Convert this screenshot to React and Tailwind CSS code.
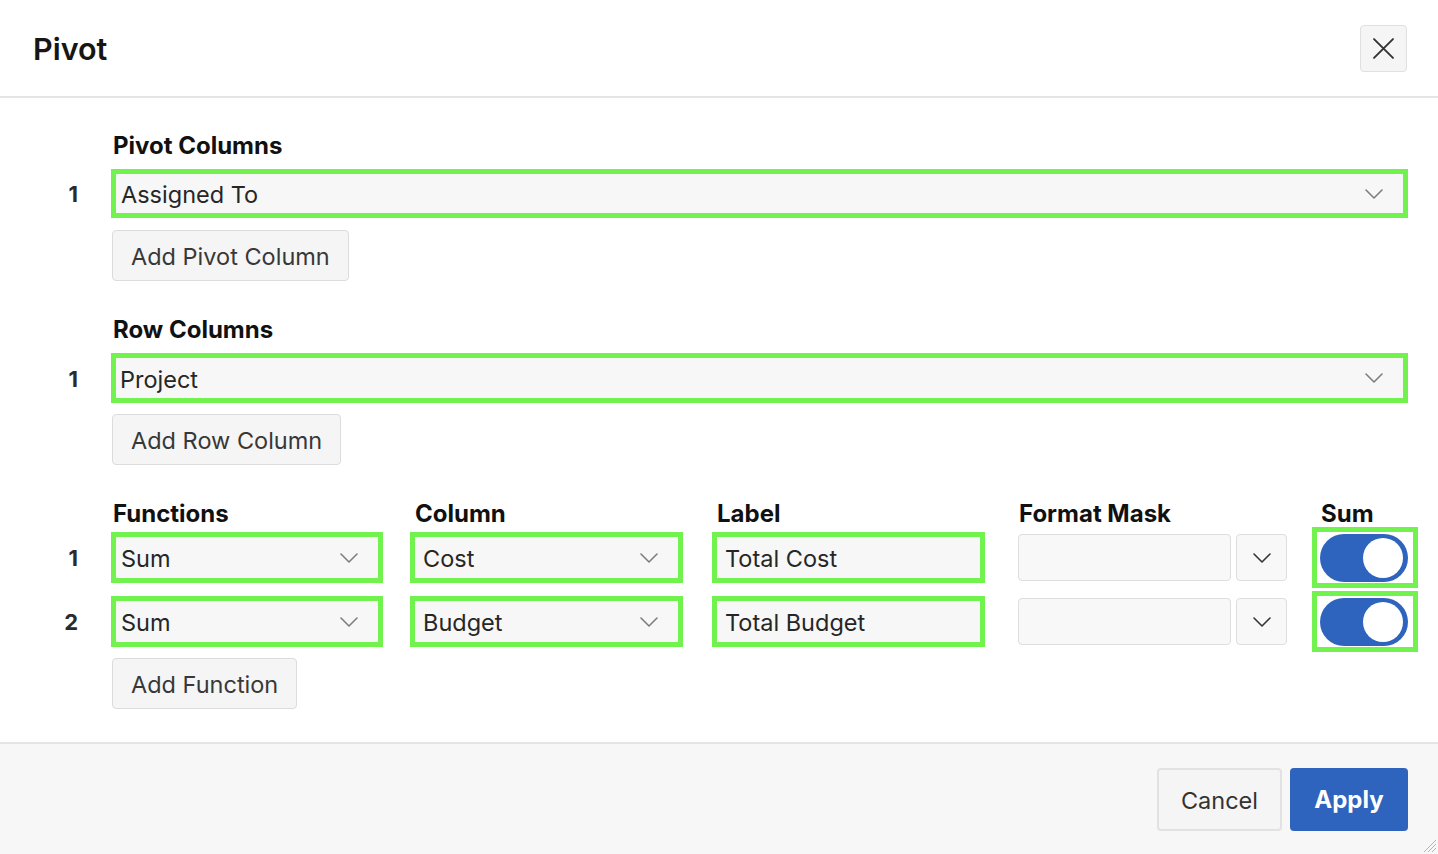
import React from 'react';

const FONT = { fontFamily: 'Inter, "Noto Sans", sans-serif' };

function Chevron({ className = '' }) {
  return (
    <svg
      viewBox="0 0 18 10"
      width="18"
      height="10"
      className={className}
      fill="none"
      stroke="currentColor"
      strokeWidth="1.6"
      strokeLinecap="round"
      strokeLinejoin="round"
    >
      <path d="M1 1l8 8 8-8" />
    </svg>
  );
}

// green-highlighted select box
function Select({ value, className = '' }) {
  return (
    <div
      className={`flex h-[49px] items-center justify-between border-[5px] border-[#72f24f] bg-[#f7f7f7] pr-[20px] text-[23.5px] text-[#262626] ${className}`}
    >
      <span className="pt-[3px]">{value}</span>
      <Chevron className="text-[#7d7d7d]" />
    </div>
  );
}

function TextBox({ value }) {
  return (
    <div className="ml-[29px] flex h-[51px] w-[273px] items-center border-[5px] border-[#72f24f] bg-[#f7f7f7] pl-[8px] pt-[3px] text-[23.5px] text-[#262626]">
      {value}
    </div>
  );
}

function GrayButton({ children }) {
  return (
    <button className="h-[51px] rounded-[4px] border-[1.5px] border-[#dcdcdc] bg-[#f5f5f5] px-[18px] pt-[3px] text-[23.5px] text-[#383838]">
      {children}
    </button>
  );
}

function Toggle() {
  return (
    <div className="ml-[25px] flex h-[61px] w-[106px] items-center border-[5px] border-[#72f24f] pl-[3px]">
      <div className="flex h-[48px] w-[88px] items-center justify-end rounded-full bg-[#2e64be] pr-[5px]">
        <div className="h-[40px] w-[40px] rounded-full bg-white" />
      </div>
    </div>
  );
}

function FormatMask() {
  return (
    <div className="ml-[33px] flex gap-[5px]">
      <div className="h-[47px] w-[213px] rounded-[4px] border-[1.5px] border-[#dedede] bg-[#f8f8f8]" />
      <div className="flex h-[47px] w-[51px] items-center justify-center rounded-[4px] border-[1.5px] border-[#dedede] bg-[#f8f8f8]">
        <Chevron className="text-[#333]" />
      </div>
    </div>
  );
}

function Num({ n }) {
  return (
    <div className="w-[111px] shrink-0 pr-[33px] pt-[2px] text-right text-[22px] font-bold text-[#2b2b2b]">{n}</div>
  );
}

function Label({ children, className = '' }) {
  return (
    <div className={`h-[28px] pt-[1px] text-[24px] leading-[28px] font-bold text-[#111] ${className}`}>{children}</div>
  );
}

const FUNCTIONS = [
  { fn: 'Sum', col: 'Cost', label: 'Total Cost' },
  { fn: 'Sum', col: 'Budget', label: 'Total Budget' },
];

export default function App() {
  return (
    <div className="relative flex h-[854px] w-[1438px] flex-col bg-white" style={FONT}>
      {/* header */}
      <div className="flex h-[98px] shrink-0 items-center justify-between border-b-2 border-[#e4e4e4] pl-[33px] pr-[31px]">
        <h1 className="pt-[1px] text-[30.5px] font-semibold text-[#161616]">Pivot</h1>
        <button className="flex h-[47px] w-[47px] items-center justify-center rounded-[4px] border-[1.5px] border-[#e0e0e0] bg-[#f5f5f5]">
          <svg viewBox="0 0 20 20" width="21" height="21" fill="none" stroke="#333" strokeWidth="1.8" strokeLinecap="round">
            <path d="M1 1l18 18M19 1L1 19" />
          </svg>
        </button>
      </div>

      {/* body */}
      <div className="flex-1 pt-[33px] pr-[30px]">
        <Label className="ml-[113px]">Pivot Columns</Label>
        <div className="mt-[10px] flex items-center">
          <Num n="1" />
          <Select value="Assigned To" className="flex-1 pl-[5px]" />
        </div>
        <div className="ml-[112px] mt-[12px]">
          <GrayButton>Add Pivot Column</GrayButton>
        </div>

        <Label className="ml-[113px] mt-[34px]">Row Columns</Label>
        <div className="mt-[10px] flex items-center">
          <Num n="1" />
          <Select value="Project" className="flex-1 h-[50px] pl-[4px]" />
        </div>
        <div className="ml-[112px] mt-[11px]">
          <GrayButton>Add Row Column</GrayButton>
        </div>

        <div className="mt-[34px] flex pl-[113px]">
          {['Functions', 'Column', 'Label', 'Format Mask', 'Sum'].map((t) => (
            <Label key={t} className="w-[302px] last:w-auto">{t}</Label>
          ))}
        </div>
        <div className="mt-[5px] flex flex-col gap-[13px]">
          {FUNCTIONS.map((r, i) => (
            <div key={i} className="flex h-[51px] items-center">
              <Num n={String(i + 1)} />
              <div className="flex items-center">
                <Select value={r.fn} className="h-[51px] w-[272px] pl-[5px]" />
                <Select value={r.col} className="ml-[27px] h-[51px] w-[273px] pl-[8px]" />
                <TextBox value={r.label} />
                <FormatMask />
                <Toggle />
              </div>
            </div>
          ))}
        </div>
        <div className="ml-[112px] mt-[11px]">
          <GrayButton>Add Function</GrayButton>
        </div>
      </div>

      {/* footer */}
      <div className="flex h-[112px] shrink-0 items-center justify-end gap-[8px] border-t-2 border-[#e4e4e4] bg-[#f7f7f7] pr-[30px]">
        <button className="h-[63px] w-[125px] rounded-[4px] border-2 border-[#e2e2e2] bg-[#f5f5f5] pt-[3px] text-[23.5px] text-[#333]">
          Cancel
        </button>
        <button className="h-[63px] w-[118px] rounded-[4px] bg-[#2e64be] pt-[2px] text-[24px] font-bold text-white">
          Apply
        </button>
      </div>

      {/* resize grip */}
      <svg className="absolute bottom-[1px] right-[1px]" viewBox="0 0 16 16" width="16" height="16" stroke="#b5b5b5" strokeWidth="1">
        <path d="M15 3L3 15M15 7L7 15M15 11L11 15" />
      </svg>
    </div>
  );
}
